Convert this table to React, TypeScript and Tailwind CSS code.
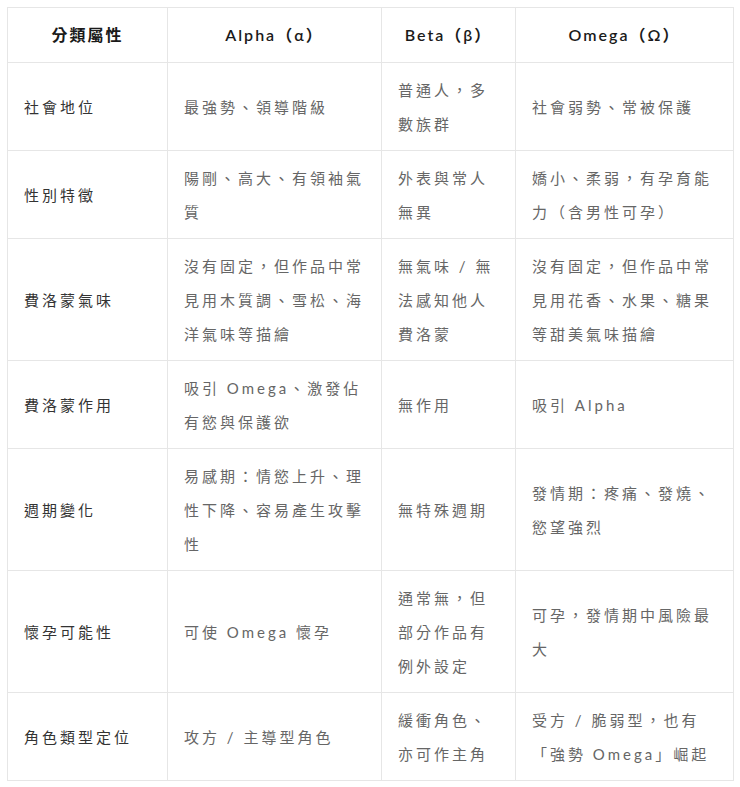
import React from 'react';

interface Row {
  label: string;
  alpha: string;
  beta: string;
  omega: string;
}

const rows: Row[] = [
  { label: '社會地位', alpha: '最強勢、領導階級', beta: '普通人，多數族群', omega: '社會弱勢、常被保護' },
  { label: '性別特徵', alpha: '陽剛、高大、有領袖氣質', beta: '外表與常人無異', omega: '嬌小、柔弱，有孕育能力（含男性可孕）' },
  {
    label: '費洛蒙氣味',
    alpha: '沒有固定，但作品中常見用木質調、雪松、海洋氣味等描繪',
    beta: '無氣味 / 無法感知他人費洛蒙',
    omega: '沒有固定，但作品中常見用花香、水果、糖果等甜美氣味描繪',
  },
  { label: '費洛蒙作用', alpha: '吸引 Omega、激發佔有慾與保護欲', beta: '無作用', omega: '吸引 Alpha' },
  {
    label: '週期變化',
    alpha: '易感期：情慾上升、理性下降、容易產生攻擊性',
    beta: '無特殊週期',
    omega: '發情期：疼痛、發燒、慾望強烈',
  },
  { label: '懷孕可能性', alpha: '可使 Omega 懷孕', beta: '通常無，但部分作品有例外設定', omega: '可孕，發情期中風險最大' },
  { label: '角色類型定位', alpha: '攻方 / 主導型角色', beta: '緩衝角色、亦可作主角', omega: '受方 / 脆弱型，也有「強勢 Omega」崛起' },
];

const font = { fontFamily: 'Lato, "Noto Sans CJK TC", sans-serif' };

const th = 'border border-[#e6e6e6] py-[10px] px-4 text-center font-semibold text-[16px] leading-[34px] text-[#1a1a1a] tracking-[2px]';
const td = 'border border-[#e6e6e6] py-[9.5px] px-4 align-middle';

export default function App() {
  return (
    <div className="min-h-screen bg-white p-[7px]" style={font}>
      <table className="table-fixed border-collapse w-[726px] text-[15px] leading-[34px] tracking-[3px]">
        <colgroup>
          <col className="w-[160px]" />
          <col className="w-[214px]" />
          <col className="w-[134px]" />
          <col className="w-[218px]" />
        </colgroup>
        <thead>
          <tr>
            <th className={th}>分類屬性</th>
            <th className={th}>Alpha（α）</th>
            <th className={th}>Beta（β）</th>
            <th className={th}>Omega（Ω）</th>
          </tr>
        </thead>
        <tbody>
          {rows.map((r) => (
            <tr key={r.label}>
              <td className={`${td} text-[#333]`}>{r.label}</td>
              <td className={`${td} text-[#666]`}>{r.alpha}</td>
              <td className={`${td} text-[#666]`}>{r.beta}</td>
              <td className={`${td} text-[#666]`}>{r.omega}</td>
            </tr>
          ))}
        </tbody>
      </table>
    </div>
  );
}
